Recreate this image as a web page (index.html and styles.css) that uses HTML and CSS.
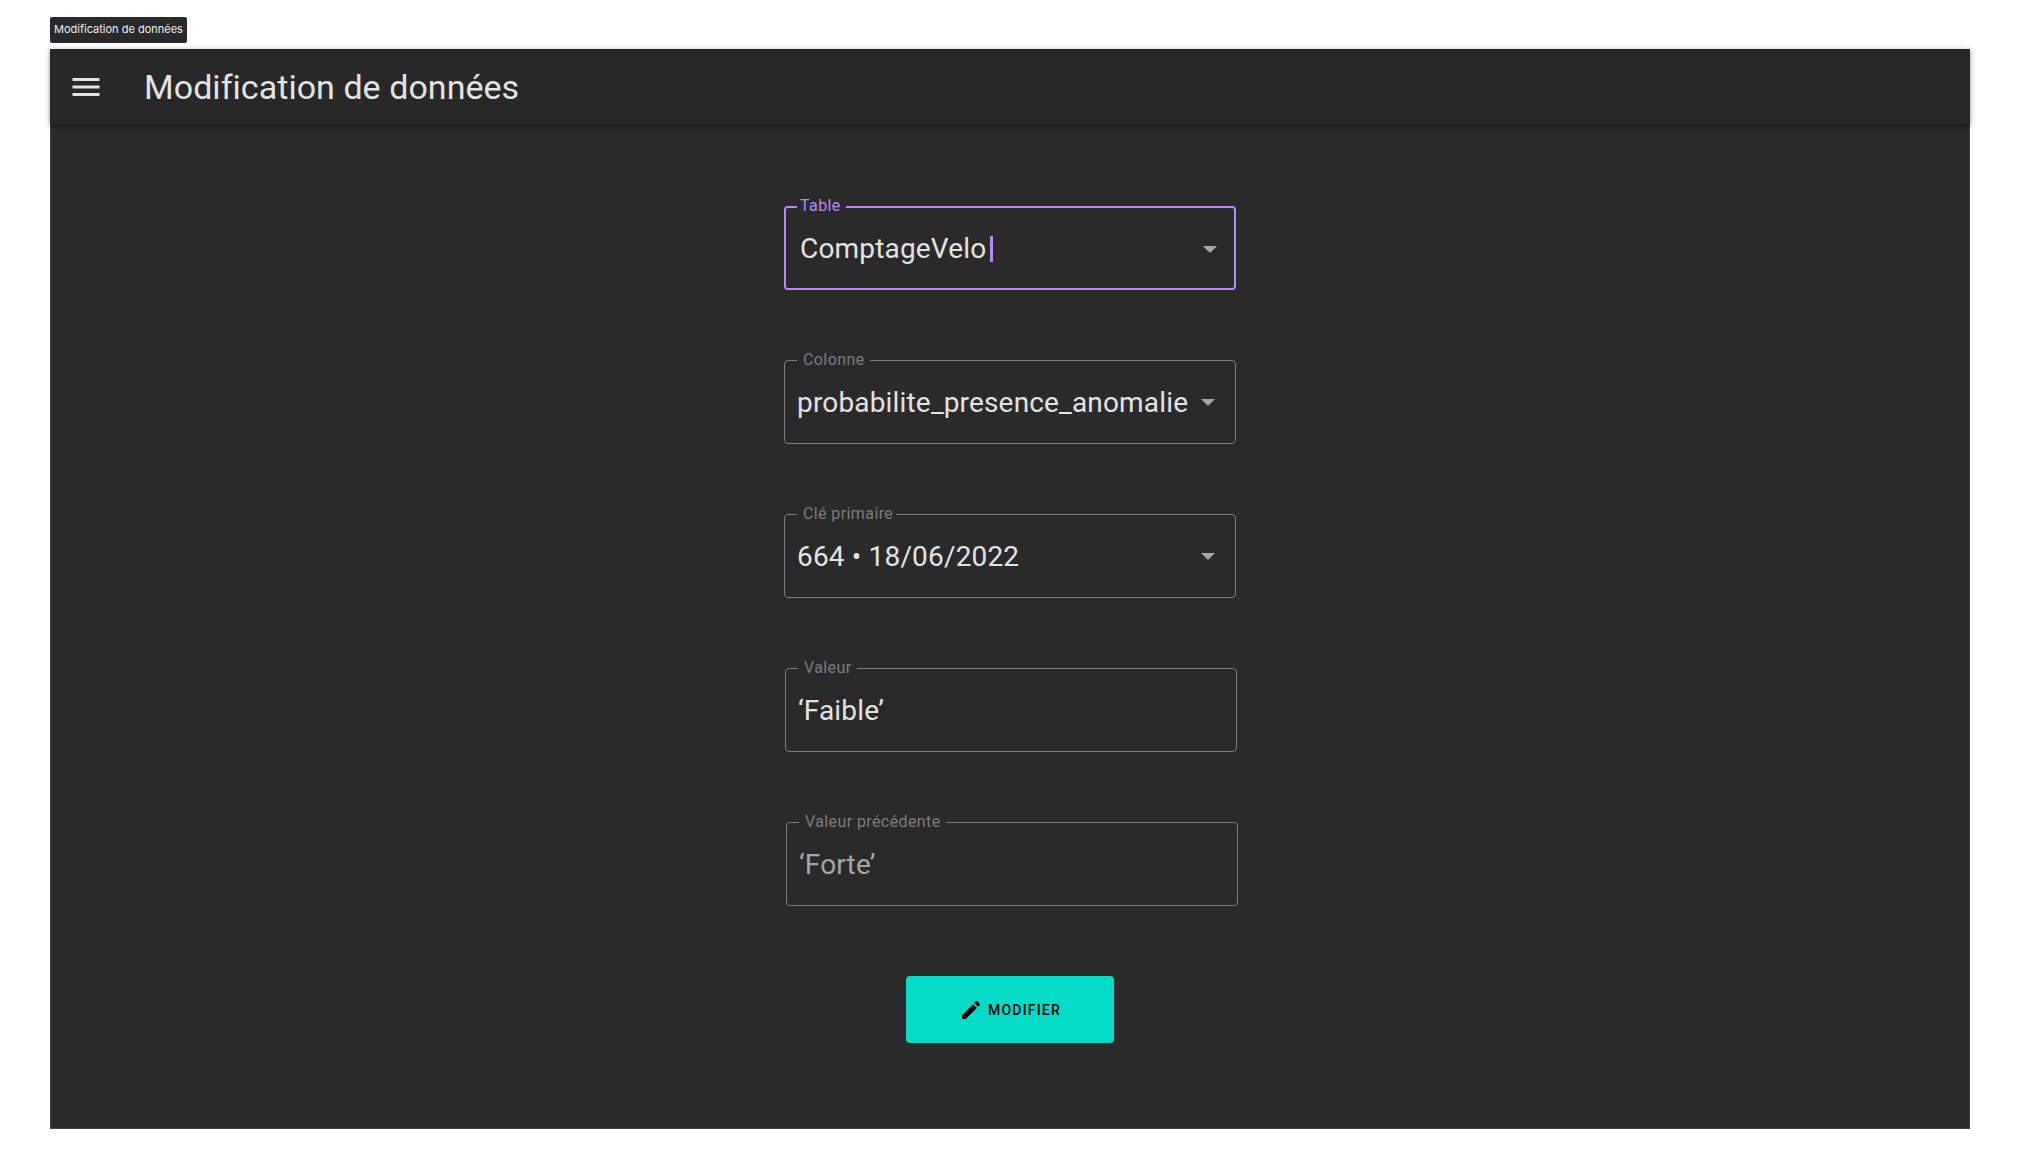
FILE: index.html
```html
<!DOCTYPE html>
<html lang="fr">
<head>
<meta charset="utf-8">
<title>Modification de données</title>
<link rel="stylesheet" href="styles.css">
</head>
<body>
<div class="tag">Modification de données</div>
<main class="frame">
  <header class="appbar">
    <svg class="menu" viewBox="0 0 24 24"><path d="M3 18h18v-2H3v2zm0-5h18v-2H3v2zm0-7v2h18V6H3z"/></svg>
    <h1 class="title">Modification de données</h1>
  </header>
  <form class="form">
    <fieldset class="field field-active">
      <legend>Table</legend>
      <div class="control"><span class="value">ComptageVelo</span><i class="caret"></i><svg class="arrow" viewBox="0 0 14 7"><path d="M0 0h14L7 7z"/></svg></div>
    </fieldset>
    <fieldset class="field">
      <legend>Colonne</legend>
      <div class="control"><span class="value">probabilite_presence_anomalie</span><svg class="arrow" viewBox="0 0 14 7"><path d="M0 0h14L7 7z"/></svg></div>
    </fieldset>
    <fieldset class="field field-key">
      <legend>Clé primaire</legend>
      <div class="control"><span class="value">664 • 18/06/2022</span><svg class="arrow" viewBox="0 0 14 7"><path d="M0 0h14L7 7z"/></svg></div>
    </fieldset>
    <fieldset class="field field-value">
      <legend>Valeur</legend>
      <div class="control"><span class="value">‘Faible’</span></div>
    </fieldset>
    <fieldset class="field field-previous">
      <legend>Valeur précédente</legend>
      <div class="control"><span class="value">‘Forte’</span></div>
    </fieldset>
    <button class="submit" type="button">
      <svg class="pencil" viewBox="0 0 24 24"><path d="M3 17.25V21h3.75L17.81 9.94l-3.75-3.75L3 17.25zM20.71 7.04a.996.996 0 0 0 0-1.41l-2.34-2.34a.996.996 0 0 0-1.41 0l-1.83 1.83 3.75 3.75 1.83-1.83z"/></svg>
      <span>MODIFIER</span>
    </button>
  </form>
</main>
</body>
</html>
```
FILE: styles.css
```css
* { box-sizing: border-box; }
body {
  margin: 0;
  padding: 17px 50px 40px;
  background: #fff;
  font-family: Roboto, "Liberation Sans", sans-serif;
  color: #e3e3e3;
}
.tag {
  width: 137px;
  height: 26px;
  padding-left: 4px;
  border-radius: 2px;
  background: #292929;
  color: #f0f0f0;
  font: 11px/25px Inter, sans-serif;
  white-space: nowrap;
}
.frame {
  width: 1920px;
  height: 1080px;
  margin-top: 6px;
  background: #2a2a2a;
  box-shadow: inset 0 0 0 1px #403e40;
}
.appbar {
  display: flex;
  align-items: center;
  height: 75px;
  padding-left: 18px;
  background: #282828;
  box-shadow: 0 1px 6px rgba(0, 0, 0, .3), 0 2px 3px rgba(0, 0, 0, .2);
}
.menu { width: 36px; height: 36px; fill: #e3e3e3; }
.title {
  margin: 0 0 0 40px;
  font-size: 34px;
  font-weight: 400;
  line-height: 40px;
  letter-spacing: .04px;
}
.form {
  display: flex;
  flex-direction: column;
  align-items: center;
  gap: 63px;
  padding-top: 75px;
}
.field {
  width: 452px;
  height: 91px;
  min-width: 0;
  margin: 0;
  padding: 0 20.5px 0 12px;
  border: 1px solid #7c7c7c;
  border-radius: 4px;
}
legend {
  height: 15px;
  padding: 0 5px 0 6px;
  color: #7c7c7c;
  font-size: 16px;
  line-height: 13px;
  letter-spacing: .4px;
  white-space: nowrap;
}
.field-active { border: 2px solid #bb86fc; padding: 0 17px 0 11px; }
.field-active legend { height: 16px; padding: 0 5px 0 3px; line-height: 14px; color: #bb86fc; }
.field-active .control { height: 68px; }
.field-active .value { margin-left: 3px; }
.field-key legend { padding-right: 3px; }
.field-value { margin-left: 2px; }
.field-previous { margin-left: 4px; }
.control {
  display: flex;
  align-items: center;
  height: 70px;
}
.value {
  font-size: 28px;
  line-height: 34px;
  letter-spacing: .17px;
  white-space: nowrap;
}
.field-previous .value { color: #a5a5a5; }
.caret { width: 3px; height: 26px; margin-left: 4px; background: #bb86fc; }
.arrow { width: 14px; height: 7px; margin: 0 0 2px auto; fill: #a5a5a5; }
.field-active .arrow { margin-bottom: 0; }
.submit {
  display: flex;
  align-items: center;
  width: 208px;
  height: 67px;
  margin-top: 7px;
  padding: 0 0 0 53px;
  gap: 5px;
  border: 0;
  border-radius: 4px;
  background: #04dcc8;
  color: #000;
  font: 500 14px/20px Roboto, sans-serif;
  letter-spacing: 1.2px;
}
.pencil { width: 24px; height: 24px; }
```
